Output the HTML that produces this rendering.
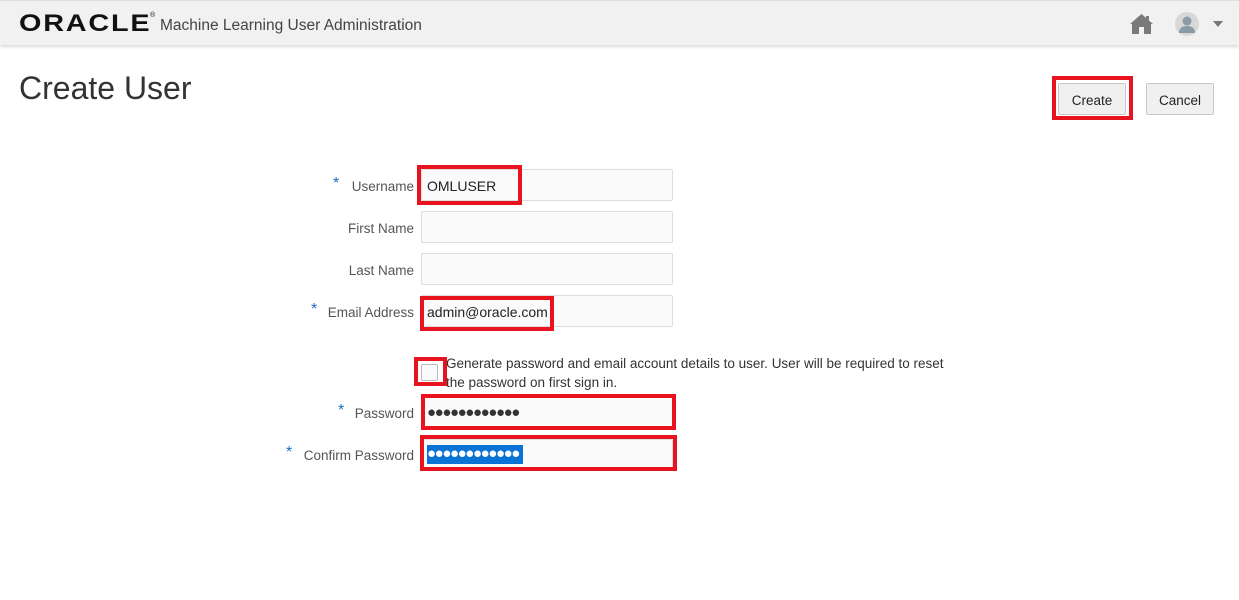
<!DOCTYPE html>
<html><head><meta charset="utf-8"><style>
*{box-sizing:border-box;margin:0;padding:0}
body{width:1239px;height:600px;background:#fff;font-family:"Segoe UI","Liberation Sans","DejaVu Sans",sans-serif;position:relative;overflow:hidden;color:#333}
.hdr{position:absolute;left:0;top:0;width:1239px;height:45px;background:#f1f1f1;border-top:1px solid #ddd;box-shadow:0 2px 3px rgba(0,0,0,.15)}
.a{position:absolute}
.lbl{position:absolute;font-size:13.5px;color:#555;text-align:right;width:200px}
.star{position:absolute;color:#1a6fc4;font-size:16px}
.inp{position:absolute;left:421px;width:252px;height:32px;background:#fafafa;border:1px solid #ddd;border-radius:2px}
.red{position:absolute;border:4px solid #e8131f}
.txt{position:absolute;font-size:14px;color:#222}
.btn{position:absolute;background:#f0f0f0;border:1px solid #c8c8c8;border-radius:2px;font-size:13.5px;color:#222;text-align:center;line-height:33px}
</style></head><body>
<div class="hdr">
<div class="a" style="left:19px;top:9px;font-family:'Liberation Sans',sans-serif;font-weight:bold;font-size:24px;letter-spacing:1.5px;color:#111;transform:scaleX(1.2);transform-origin:left">ORACLE</div>
<div class="a" style="left:150px;top:11px;font-size:7px;color:#111">®</div>
<div class="a" style="left:160px;top:16px;font-size:15.5px;color:#444">Machine Learning User Administration</div>
<svg class="a" style="left:1129px;top:12px" width="25" height="22" viewBox="0 0 25 22"><path d="M12.5 1 L1 11 L3 11 L3 21 L10 21 L10 14 L15 14 L15 21 L22 21 L22 11 L24 11 Z" fill="#7a7a7a"/><rect x="17" y="3" width="3" height="5" fill="#7a7a7a"/></svg>
<svg class="a" style="left:1175px;top:11px" width="24" height="24" viewBox="0 0 24 24"><circle cx="12" cy="12" r="12" fill="#d8d8d8"/><circle cx="12" cy="9" r="4.5" fill="#8a9aa6"/><path d="M4 21 Q4 14 12 14 Q20 14 20 21 Z" fill="#8a9aa6"/></svg>
<div class="a" style="left:1213px;top:20px;width:0;height:0;border-left:5px solid transparent;border-right:5px solid transparent;border-top:6px solid #777"></div>
</div>
<div class="a" style="left:19px;top:70px;font-size:32px;color:#333;font-weight:300">Create User</div>
<div class="red" style="left:1052px;top:76px;width:81px;height:44px"></div>
<div class="btn" style="left:1058px;top:83px;width:68px;height:32px">Create</div>
<div class="btn" style="left:1146px;top:83px;width:68px;height:32px">Cancel</div>

<span class="star" style="left:333px;top:175px">*</span><div class="lbl" style="left:214px;top:179px">Username</div>
<div class="inp" style="top:169px"></div>
<div class="lbl" style="left:214px;top:221px">First Name</div><div class="inp" style="top:211px"></div>
<div class="lbl" style="left:214px;top:263px">Last Name</div><div class="inp" style="top:253px"></div>
<span class="star" style="left:311px;top:301px">*</span><div class="lbl" style="left:214px;top:305px">Email Address</div><div class="inp" style="top:295px"></div>
<span class="star" style="left:338px;top:402px">*</span><div class="lbl" style="left:214px;top:406px">Password</div><div class="inp" style="top:397px"></div>
<span class="star" style="left:286px;top:444px">*</span><div class="lbl" style="left:214px;top:448px">Confirm Password</div><div class="inp" style="top:439px"></div>

<div class="red" style="left:417px;top:165px;width:105px;height:40px"></div>
<div class="txt" style="left:427px;top:178px">OMLUSER</div>
<div class="red" style="left:420px;top:296px;width:134px;height:35px"></div>
<div class="txt" style="left:427px;top:304px">admin@oracle.com</div>

<div class="red" style="left:414px;top:357px;width:33px;height:29px"></div>
<div class="a" style="left:421px;top:364px;width:17px;height:17px;background:#fafafa;border:1px solid #bbb;border-radius:2px"></div>
<div class="a" style="left:446px;top:354px;width:520px;font-size:13.5px;color:#333;line-height:19px">Generate password and email account details to user. User will be required to reset the password on first sign in.</div>

<div class="red" style="left:421px;top:394px;width:255px;height:36px"></div>
<div class="a" style="left:427px;top:404px;font-size:15px;letter-spacing:-1.4px;color:#333">●●●●●●●●●●●●</div>
<div class="red" style="left:420px;top:435px;width:257px;height:36px"></div>
<div class="a" style="left:427px;top:445px;width:96px;height:19px;background:#0a74d6"></div>
<div class="a" style="left:427px;top:445px;font-size:15px;letter-spacing:-1.4px;color:#fff">●●●●●●●●●●●●</div>
</body></html>
